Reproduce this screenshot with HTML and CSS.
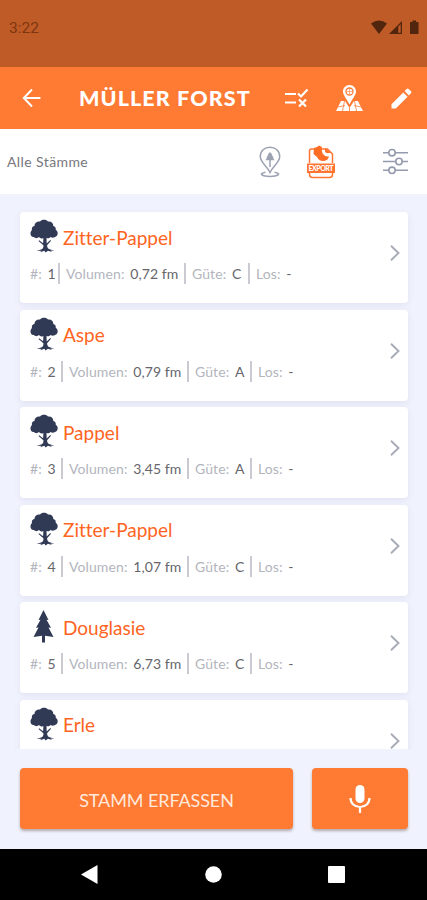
FILE: index.html
```html
<!DOCTYPE html>
<html lang="de">
<head>
    <meta charset="UTF-8">
    <meta name="viewport" content="width=device-width, initial-scale=1.0">
    <title>Müller Forst</title>
    <link rel="stylesheet" href="styles.css">
</head>
<body>
    <!-- Shared icons -->
    <svg class="sprite" width="0" height="0">
        <symbol id="leaf-tree" viewBox="0 0 28 34">
            <path fill="#303a55" d="M10 2.500C11.500.2 16.500.2 18 2.500c3-.6 5.500 1.500 5.300 4.500 2 .5 2.700 2 2.400 3.700 2.600 1.500 2.600 5.300.3 6.800-1.500 1.400-4 1.500-5.500.4-1 1.500-3 1.800-4 .8l.2 5.800 3.600-3.500.7.7-3.900 4.600c0 2.400.8 3.700 3.400 4.200l4 1.300-4-.2 1.500 1.500-4-1.400-2.500 1.800-1-1.700-4.500 1.400 1.500-1.500-5 .3 4.500-1.400c2-.6 2.600-2 2.400-4.400L8.500 22l.6-.7 4 3 .3-5.400c-1.500 1-3.500.6-4.400-.8-1.500 1.500-4 1.300-5.200 0C.5 18.500-.8 13.500 2 11c-.6-2 .5-3.700 2.500-4C4.300 4 7 2 10 2.500z"/>
        </symbol>
        <symbol id="fir-tree" viewBox="0 0 28 34">
            <path fill="#303a55" d="M13.500 1l5 10-2-.2 4.500 8-2.500-.2 5 9.400-8.500-1.200V33.500h-3v-6.700L3.500 28l5-9.400-2.500.2 4.500-8-2 .2z"/>
        </symbol>
        <symbol id="chevron" viewBox="0 0 10 16">
            <path fill="none" stroke="#a7abb8" stroke-width="1.900" d="M1 .8L8.500 8 1 15.200"/>
        </symbol>
    </svg>

    <div class="status-bar">
        <span class="clock">3:22</span>
        <svg class="status-icons" width="49" height="15" viewBox="0 0 49 15">
            <path fill="#51250e" d="M0 3.500Q8 -2.500 16 3.500L8 14z"/>
            <path fill="#51250e" d="M18 14L31 1v13z"/>
            <path fill="#bf5b27" d="M27.300 6.500l2.400-2.400v8.700h-2.400z"/>
            <path fill="#51250e" d="M39 2h2.500V.5h3.500V2h2.500v12H39z"/>
        </svg>
    </div>

    <header class="app-bar">
        <svg class="back" width="20" height="20" viewBox="0 0 20 20">
            <path fill="none" stroke="#fff" stroke-width="2" d="M18.500 10H2M10 1.500L1.800 10l8.200 8.500"/>
        </svg>
        <h1>MÜLLER FORST</h1>
        <svg class="select" width="24" height="20" viewBox="0 0 24 20">
            <path fill="none" stroke="#fff" stroke-width="2.200" d="M0 6h11M0 14.500h11M13 5.500l3 3 6.500-7M14 11.500l7 7M21 11.500l-7 7"/>
        </svg>
        <svg class="map" width="27" height="28" viewBox="0 0 27 28">
            <path fill="#fff" d="M5 17h4l4.500 7 4.500-7h4l5 10H0z"/>
            <path fill="none" stroke="#ff7a33" stroke-width=".8" d="M8.500 17L6.500 27M18.500 17l2 10M2 23l7-1.500M25 23l-7-1.500M13.500 24v3"/>
            <path fill="#fff" d="M13.500 1c-4 0-6.500 3-6.500 6.400 0 3.600 4 7.800 6.500 13.100C16 15.200 20 11 20 7.400 20 4 17.500 1 13.500 1z"/>
            <circle cx="13.500" cy="7.500" r="3.500" fill="none" stroke="#ff7a33" stroke-width="1.300"/>
            <path stroke="#ff9a63" stroke-width=".8" d="M13.500 5v5M11 7.500h5"/>
        </svg>
        <svg class="edit" width="21" height="21" viewBox="0 0 21 21">
            <path fill="#fff" d="M.5 16.200L12.300 4.400l4.300 4.300L4.800 20.500H.5zM13.600 3.100L15.700 1q1-.9 2 0L20 3.300q.9 1 0 2l-2.100 2.100z"/>
        </svg>
    </header>

    <div class="filter-bar">
        <span class="filter-name">Alle Stämme</span>
        <svg class="pin" width="22" height="32" viewBox="0 0 22 32">
            <g fill="none" stroke="#9ca2b2" stroke-width="1.500">
                <path d="M11 26.500C8.500 20.500 1.300 16.500 1.300 10.500 1.300 5 5.500 1.200 11 1.200s9.700 3.800 9.700 9.300C20.700 16.500 13.500 20.500 11 26.500z"/>
                <path d="M6.500 26.300c-8 1.500-3 4.200 4.500 4.200s12.500-2.700 4.500-4.200"/>
                <path d="M11 14v7"/>
            </g>
            <path fill="#9ca2b2" d="M11 6l2.500 3h-.8l2 2.500h-.8l1.600 2.700h-9l1.600-2.700h-.8l2-2.500h-.8z"/>
        </svg>
        <svg class="export" width="30" height="34" viewBox="0 0 30 34">
            <path fill="none" stroke="#ff7430" stroke-width="1.500" d="M3.500 18V6q0-2 2-2h16l5 5v9M3.500 27v2.500q0 3 3 3h17q3 0 3-3V27"/>
            <path fill="#ff6d25" d="M8 3l3-1 2-1.500L16 2q-1 5 2 8 2 2 5 1.500-1 4-5 4.500-5 .5-7-4L7.500 9zM19 3l6 5h-4q-2 0-2-2z"/>
            <path fill="#ff7430" d="M1 18.500h28V28H1z"/>
            <text class="export-label" x="15" y="25.800" text-anchor="middle" textLength="25">EXPORT</text>
        </svg>
        <svg class="sliders" width="25" height="27" viewBox="0 0 25 27">
            <g fill="#fff" stroke="#959bae" stroke-width="1.600">
                <path d="M0 4.700h25M0 13.500h25M0 22.300h25"/>
                <circle cx="9" cy="4.700" r="3.200"/>
                <circle cx="16" cy="13.500" r="3.200"/>
                <circle cx="9" cy="22.300" r="3.200"/>
            </g>
        </svg>
    </div>

    <main class="list">
        <article class="card">
            <div class="card-title"><svg class="tree"><use href="#leaf-tree"/></svg><h2>Zitter-Pappel</h2></div>
            <div class="details first">
                <span>#: <b>1</b></span><span>Volumen: <b>0,72 fm</b></span><span>Güte: <b>C</b></span><span>Los: <b>-</b></span>
            </div>
            <svg class="chevron"><use href="#chevron"/></svg>
        </article>
        <article class="card">
            <div class="card-title"><svg class="tree"><use href="#leaf-tree"/></svg><h2>Aspe</h2></div>
            <div class="details">
                <span>#: <b>2</b></span><span>Volumen: <b>0,79 fm</b></span><span>Güte: <b>A</b></span><span>Los: <b>-</b></span>
            </div>
            <svg class="chevron"><use href="#chevron"/></svg>
        </article>
        <article class="card">
            <div class="card-title"><svg class="tree"><use href="#leaf-tree"/></svg><h2>Pappel</h2></div>
            <div class="details">
                <span>#: <b>3</b></span><span>Volumen: <b>3,45 fm</b></span><span>Güte: <b>A</b></span><span>Los: <b>-</b></span>
            </div>
            <svg class="chevron"><use href="#chevron"/></svg>
        </article>
        <article class="card">
            <div class="card-title"><svg class="tree"><use href="#leaf-tree"/></svg><h2>Zitter-Pappel</h2></div>
            <div class="details">
                <span>#: <b>4</b></span><span>Volumen: <b>1,07 fm</b></span><span>Güte: <b>C</b></span><span>Los: <b>-</b></span>
            </div>
            <svg class="chevron"><use href="#chevron"/></svg>
        </article>
        <article class="card">
            <div class="card-title"><svg class="tree"><use href="#fir-tree"/></svg><h2>Douglasie</h2></div>
            <div class="details">
                <span>#: <b>5</b></span><span>Volumen: <b>6,73 fm</b></span><span>Güte: <b>C</b></span><span>Los: <b>-</b></span>
            </div>
            <svg class="chevron"><use href="#chevron"/></svg>
        </article>
        <article class="card">
            <div class="card-title"><svg class="tree"><use href="#leaf-tree"/></svg><h2>Erle</h2></div>
            <svg class="chevron"><use href="#chevron"/></svg>
        </article>
    </main>

    <div class="actions">
        <button class="add">STAMM ERFASSEN</button>
        <button class="mic" aria-label="Spracheingabe">
            <svg width="22" height="30" viewBox="0 0 22 30">
                <rect x="6.500" y="1" width="9" height="18" rx="4.500" fill="#fff"/>
                <path fill="none" stroke="#fff" stroke-width="2.200" d="M1.500 14c0 5.500 4 9 9.500 9s9.500-3.500 9.500-9M11 23v6"/>
            </svg>
        </button>
    </div>

    <nav class="nav-bar">
        <svg width="17" height="19" viewBox="0 0 17 19"><path fill="#fff" d="M0 9.500L16.500 0v19z"/></svg>
        <svg width="17" height="17" viewBox="0 0 17 17"><circle cx="8.500" cy="8.500" r="8.300" fill="#fff"/></svg>
        <svg width="17" height="17" viewBox="0 0 17 17"><rect width="17" height="17" rx="1" fill="#fff"/></svg>
    </nav>
</body>
</html>
```

FILE: styles.css
```css
* {
    box-sizing: border-box;
}

body {
    font-family: Lato, "Liberation Sans", sans-serif;
    font-variant-ligatures: none;
    margin: 0;
    height: 900px;
    display: flex;
    flex-direction: column;
    background-color: #f0f3fd;
    overflow: hidden;
}

svg {
    display: block;
    flex: none;
}

.sprite {
    position: absolute;
}

/* Android status bar */
.status-bar {
    height: 67px;
    flex: none;
    padding: 20px 7px 0 9px;
    display: flex;
    justify-content: space-between;
    background-color: #bf5b27;
}

.clock {
    font-family: Roboto, sans-serif;
    font-size: 15.5px;
    line-height: 17px;
    color: #7d360f;
}

/* App bar */
.app-bar {
    height: 62px;
    flex: none;
    display: flex;
    align-items: center;
    padding: 0 15px 0 22px;
    background-color: #ff7a33;
}

.app-bar h1 {
    margin: 0 0 0 37px;
    width: 206px;
    font-size: 21.5px;
    font-weight: 900;
    letter-spacing: 1.1px;
    white-space: nowrap;
    color: #fff;
}

.map {
    margin-left: 27px;
}

.edit {
    margin-left: auto;
}

/* Filter bar */
.filter-bar {
    height: 65px;
    flex: none;
    display: flex;
    align-items: center;
    padding: 0 19px 0 7px;
    background-color: #fff;
}

.filter-name {
    width: 252px;
    font-size: 14px;
    letter-spacing: 0.4px;
    color: #77777d;
}

.export {
    margin-left: 25px;
}

.export-label {
    font-size: 7px;
    font-weight: 900;
    fill: #fff;
}

.sliders {
    margin-left: auto;
}

/* Tree list */
.list {
    height: 555px;
    flex: none;
    padding: 18px 19px 0 20px;
    overflow: hidden;
}

.card {
    position: relative;
    height: 91px;
    margin-bottom: 6.6px;
    padding: 7px 10px;
    border-radius: 4px;
    background-color: #fff;
    box-shadow: 0 2px 6px rgba(100, 80, 160, 0.1);
}

.card-title {
    display: flex;
    align-items: center;
    height: 34px;
}

.tree {
    width: 28px;
    height: 34px;
}

.card h2 {
    margin: 2px 0 0 5px;
    font-size: 19px;
    font-weight: 400;
    color: #ff6422;
}

.details {
    display: grid;
    grid-template-columns: 31px 126px 63px auto;
    margin-top: 10px;
    font-size: 14px;
    line-height: 21px;
    letter-spacing: 0.1px;
    white-space: nowrap;
    color: #b3b5bd;
}

.details.first {
    grid-template-columns: 28px 126px 64px auto;
}

.details span + span {
    padding-left: 6px;
    border-left: 2px solid #c9cad2;
}

.details b {
    margin-left: 2px;
    font-weight: 400;
    color: #66666b;
}

.chevron {
    position: absolute;
    right: 8px;
    top: 33px;
    width: 10px;
    height: 16px;
}

/* Bottom buttons */
.actions {
    display: flex;
    flex: none;
    gap: 19px;
    height: 100px;
    padding: 19px 19px 20px 20px;
}

.actions button {
    border: none;
    border-radius: 4px;
    padding: 0;
    background-color: #ff7a33;
    box-shadow: 0 2px 3px rgba(90, 60, 50, 0.4);
}

.add {
    width: 273px;
    font-family: inherit;
    font-size: 18px;
    letter-spacing: -0.1px;
    color: #ffe9dc;
}

.actions .add {
    padding-top: 2px;
}

.mic {
    flex: 1;
    display: flex;
    align-items: center;
    justify-content: center;
}

/* Android navigation */
.nav-bar {
    flex: 1;
    display: flex;
    align-items: center;
    justify-content: space-between;
    padding: 0 82px 0 81px;
    background-color: #000;
}
```
